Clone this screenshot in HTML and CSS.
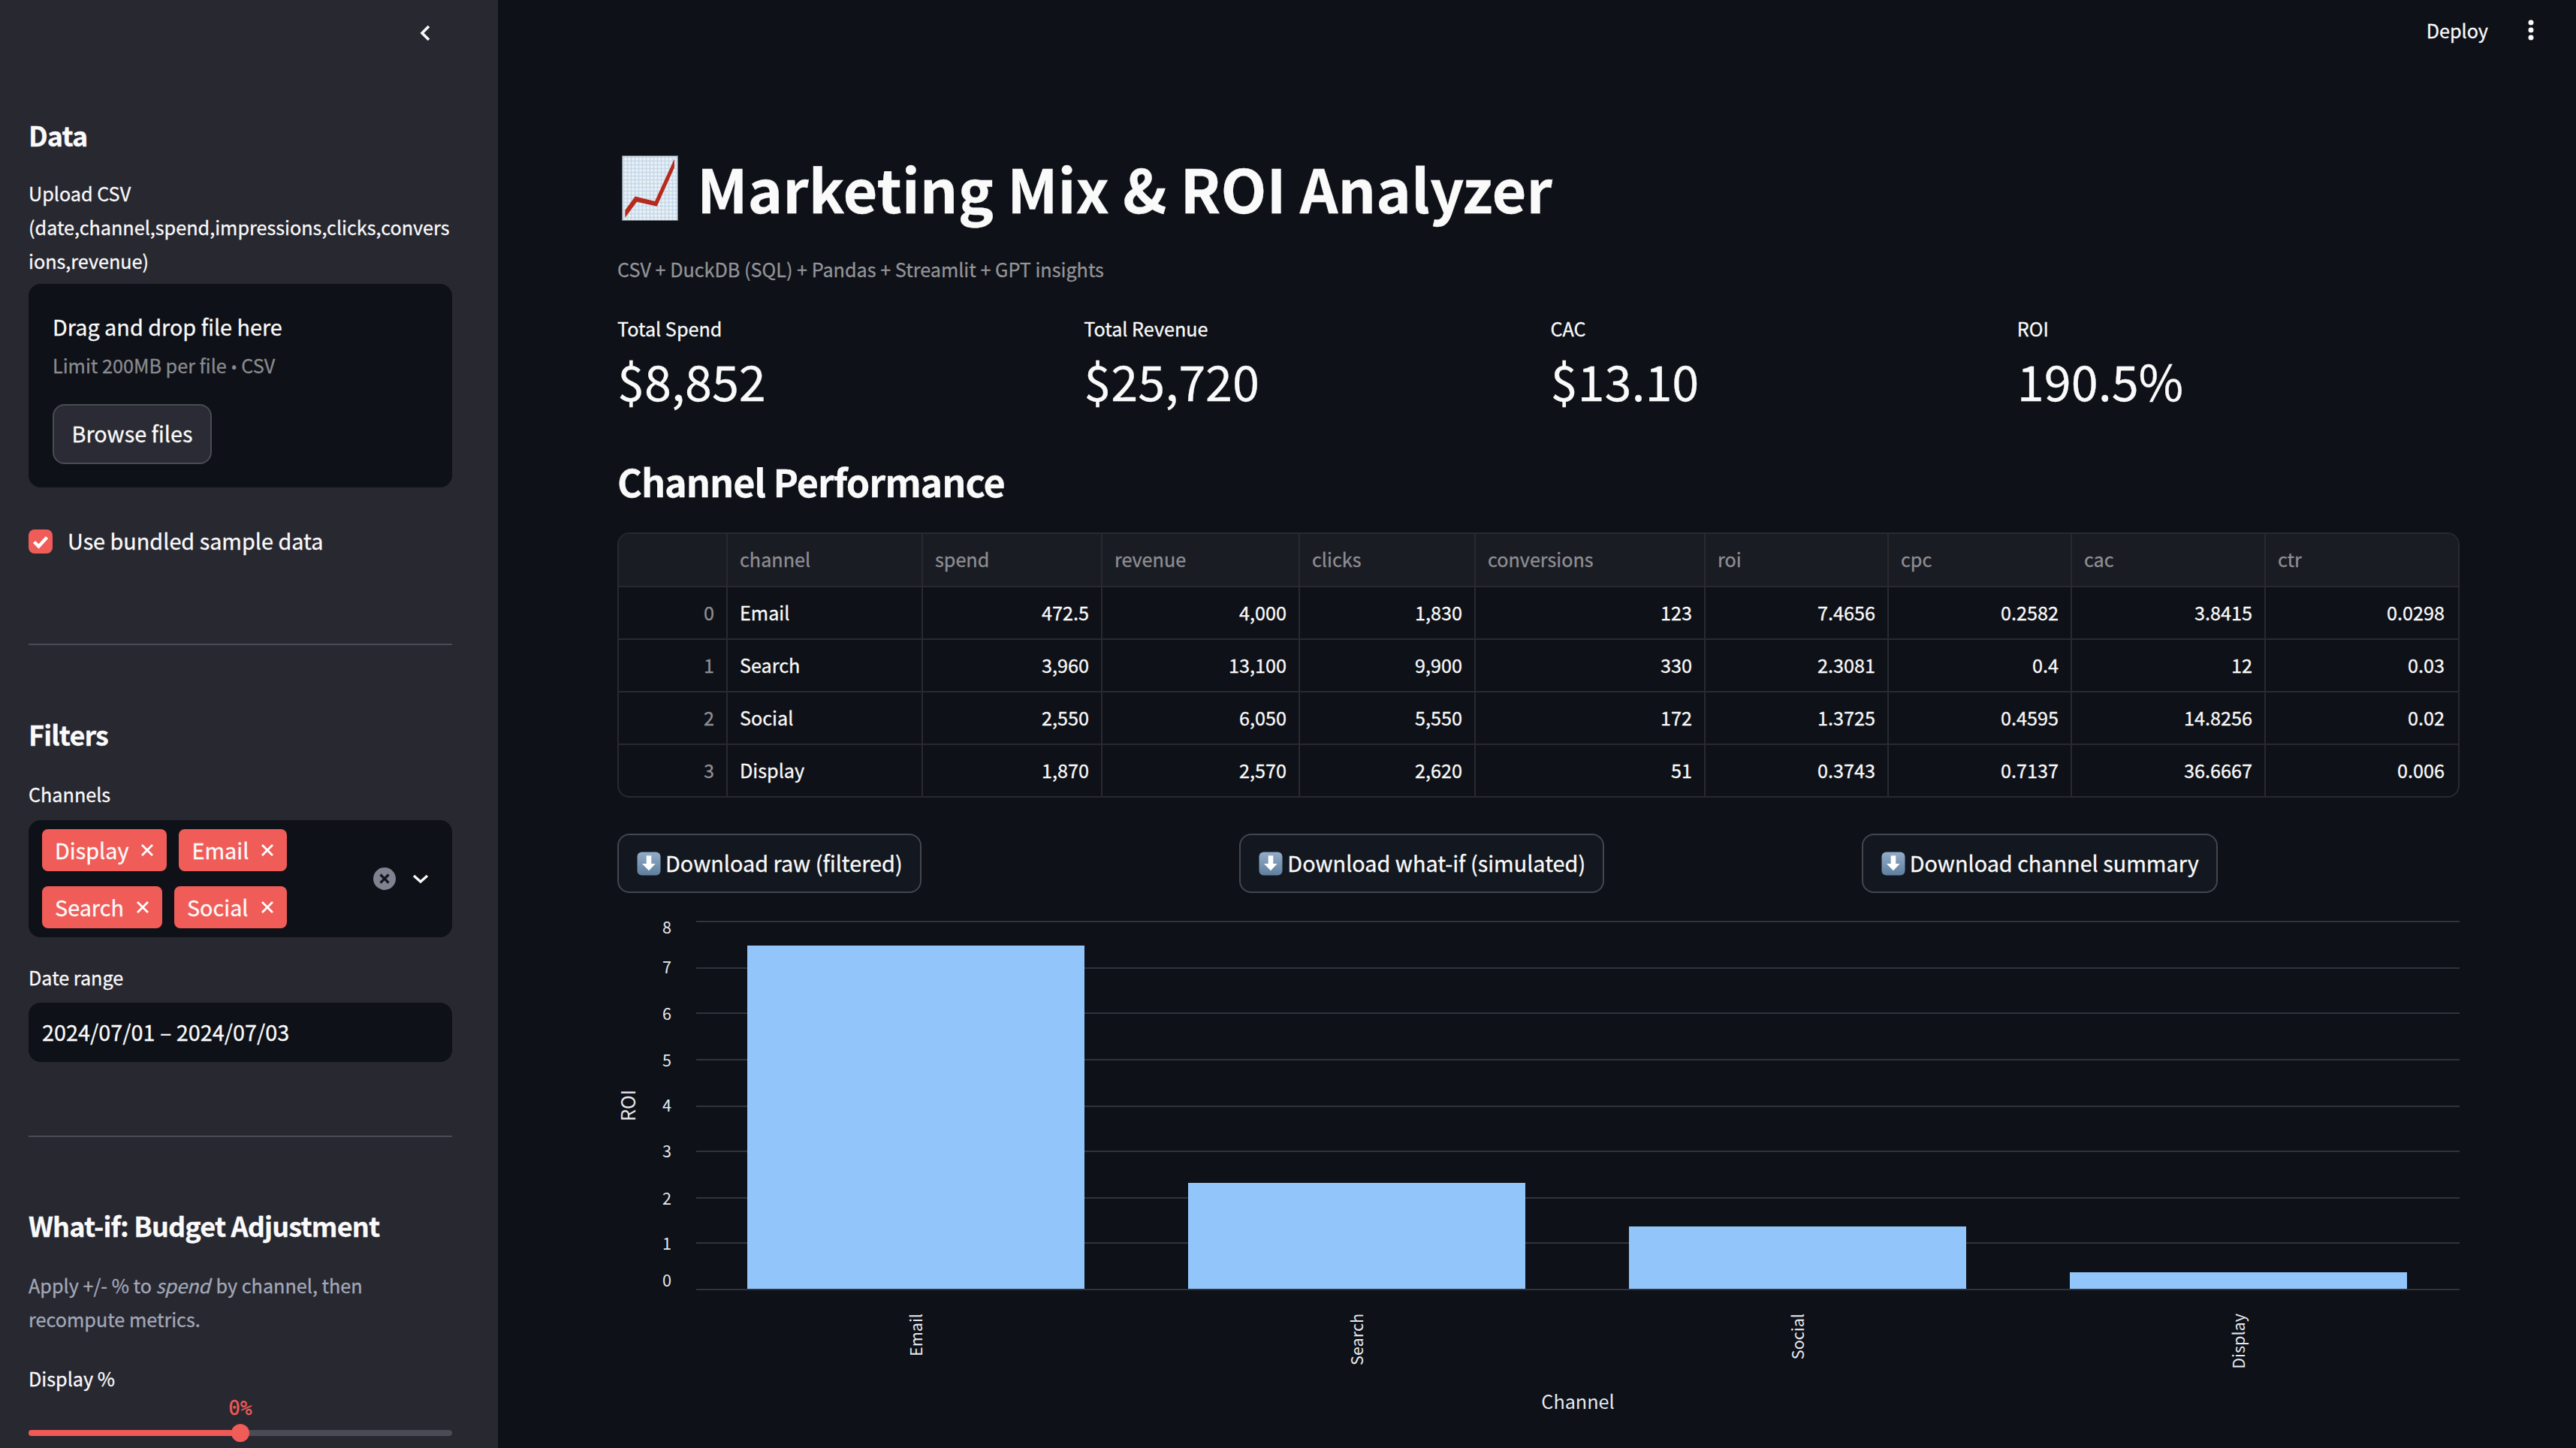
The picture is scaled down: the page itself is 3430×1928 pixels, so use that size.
FILE: index.html
```html
<!DOCTYPE html>
<html lang="en">
<head>
    <meta charset="UTF-8">
    <title>Marketing Mix &amp; ROI Analyzer</title>
    <link rel="stylesheet" href="styles.css">
</head>
<body>
    <aside class="sidebar">
        <div class="sidebar-top">
            <svg class="collapse" viewBox="0 0 16 24"><path d="M13 3 L4 12 L13 21" fill="none" stroke="#fafafa" stroke-width="3.6"/></svg>
        </div>

        <h2 class="side-title title-data">Data</h2>
        <p class="label label-upload">Upload CSV (date,channel,spend,impressions,clicks,conversions,revenue)</p>
        <div class="dropzone">
            <div class="drop-title">Drag and drop file here</div>
            <div class="drop-limit">Limit 200MB per file <span class="bullet">•</span> CSV</div>
            <button class="browse">Browse files</button>
        </div>
        <label class="check">
            <span class="check-box"><svg viewBox="0 0 32 32"><path d="M7.5 16.5 L13.5 22.5 L24.5 10.5" fill="none" stroke="#fff" stroke-width="4.4"/></svg></span>
            <span class="check-text">Use bundled sample data</span>
        </label>
        <hr class="rule rule-first">

        <h2 class="side-title title-filters">Filters</h2>
        <p class="label label-channels">Channels</p>
        <div class="multiselect">
            <div class="tags">
                <span class="tag">Display<svg viewBox="0 0 18 18"><path d="M2 2 L16 16 M16 2 L2 16"/></svg></span>
                <span class="tag">Email<svg viewBox="0 0 18 18"><path d="M2 2 L16 16 M16 2 L2 16"/></svg></span>
                <span class="tag">Search<svg viewBox="0 0 18 18"><path d="M2 2 L16 16 M16 2 L2 16"/></svg></span>
                <span class="tag">Social<svg viewBox="0 0 18 18"><path d="M2 2 L16 16 M16 2 L2 16"/></svg></span>
            </div>
            <svg class="clear" viewBox="0 0 30 30"><circle cx="15" cy="15" r="15" fill="#7f828f"/><path d="M9.5 9.5 L20.5 20.5 M20.5 9.5 L9.5 20.5" stroke="#14151b" stroke-width="3.2"/></svg>
            <svg class="open" viewBox="0 0 22 14"><path d="M2 3 L11 11 L20 3" fill="none" stroke="#fafafa" stroke-width="3.4"/></svg>
        </div>
        <p class="label label-date">Date range</p>
        <div class="date-input">2024/07/01 – 2024/07/03</div>
        <hr class="rule rule-second">

        <h2 class="side-title title-whatif">What-if: Budget Adjustment</h2>
        <p class="muted">Apply +/- % to <em>spend</em> by channel, then recompute metrics.</p>
        <p class="label label-display">Display %</p>
        <div class="slider">
            <span class="slider-value">0%</span>
            <div class="track"><div class="track-fill"></div></div>
            <span class="thumb"></span>
        </div>
    </aside>

    <main class="main">
        <header class="topbar">
            <span class="deploy">Deploy</span>
            <svg class="dots" viewBox="0 0 8 28"><circle cx="4" cy="4" r="3.5"/><circle cx="4" cy="14" r="3.5"/><circle cx="4" cy="24" r="3.5"/></svg>
        </header>

        <h1 class="page-title">
            <svg class="title-emoji" viewBox="0 0 75 87">
                <defs>
                    <pattern id="paper" width="5" height="5" patternUnits="userSpaceOnUse">
                        <rect width="5" height="5" fill="#eef2f6"/>
                        <path d="M0 2.5 H5 M2.5 0 V5" stroke="#c3d8ea" stroke-width="1.6"/>
                    </pattern>
                </defs>
                <rect x="0.5" y="0.5" width="74" height="86" fill="url(#paper)" stroke="#6f7780"/>
                <path d="M4.4 72.7 L17.7 54.4 L44 61 L70 4.4 L70 16 L46.7 67.7 L20 61.7 L4.4 82.7 Z" fill="#b62a1c"/>
            </svg>
            Marketing Mix &amp; ROI Analyzer
        </h1>
        <p class="caption">CSV + DuckDB (SQL) + Pandas + Streamlit + GPT insights</p>

        <section class="metrics">
            <div class="metric"><div class="metric-label">Total Spend</div><div class="metric-value">$8,852</div></div>
            <div class="metric"><div class="metric-label">Total Revenue</div><div class="metric-value">$25,720</div></div>
            <div class="metric"><div class="metric-label">CAC</div><div class="metric-value">$13.10</div></div>
            <div class="metric"><div class="metric-label">ROI</div><div class="metric-value">190.5%</div></div>
        </section>

        <h3 class="section-title">Channel Performance</h3>

        <div class="grid-table">
            <div class="grid-row grid-head">
                <span></span><span>channel</span><span>spend</span><span>revenue</span><span>clicks</span><span>conversions</span><span>roi</span><span>cpc</span><span>cac</span><span>ctr</span>
            </div>
            <div class="grid-row">
                <span class="idx">0</span><span class="txt">Email</span><span>472.5</span><span>4,000</span><span>1,830</span><span>123</span><span>7.4656</span><span>0.2582</span><span>3.8415</span><span>0.0298</span>
            </div>
            <div class="grid-row">
                <span class="idx">1</span><span class="txt">Search</span><span>3,960</span><span>13,100</span><span>9,900</span><span>330</span><span>2.3081</span><span>0.4</span><span>12</span><span>0.03</span>
            </div>
            <div class="grid-row">
                <span class="idx">2</span><span class="txt">Social</span><span>2,550</span><span>6,050</span><span>5,550</span><span>172</span><span>1.3725</span><span>0.4595</span><span>14.8256</span><span>0.02</span>
            </div>
            <div class="grid-row">
                <span class="idx">3</span><span class="txt">Display</span><span>1,870</span><span>2,570</span><span>2,620</span><span>51</span><span>0.3743</span><span>0.7137</span><span>36.6667</span><span>0.006</span>
            </div>
        </div>

        <div class="downloads">
            <div><button class="download"><svg class="arrow-emoji" viewBox="0 0 32 32"><use href="#down-box"/></svg>Download raw (filtered)</button></div>
            <div><button class="download"><svg class="arrow-emoji" viewBox="0 0 32 32"><use href="#down-box"/></svg>Download what-if (simulated)</button></div>
            <div><button class="download"><svg class="arrow-emoji" viewBox="0 0 32 32"><use href="#down-box"/></svg>Download channel summary</button></div>
        </div>

        <svg class="sprites" width="0" height="0">
            <defs>
                <linearGradient id="box-fill" x1="0" y1="0" x2="0" y2="1">
                    <stop offset="0" stop-color="#94adc8"/>
                    <stop offset="1" stop-color="#5f7f9f"/>
                </linearGradient>
                <g id="down-box">
                    <rect x="0.5" y="0.5" width="31" height="31" rx="6" fill="url(#box-fill)"/>
                    <path d="M12.7 5.3 H19.3 V16 H24.7 L16 25.3 L7 16 H12.7 Z" fill="#fff"/>
                </g>
            </defs>
        </svg>

        <svg class="chart" viewBox="0 0 2453 728">
            <g class="grid-lines">
                <line x1="105" x2="2453" y1="27" y2="27"/>
                <line x1="105" x2="2453" y1="89" y2="89"/>
                <line x1="105" x2="2453" y1="149" y2="149"/>
                <line x1="105" x2="2453" y1="211" y2="211"/>
                <line x1="105" x2="2453" y1="273" y2="273"/>
                <line x1="105" x2="2453" y1="333" y2="333"/>
                <line x1="105" x2="2453" y1="395" y2="395"/>
                <line x1="105" x2="2453" y1="455" y2="455"/>
            </g>
            <g class="bars">
                <rect x="173" y="59" width="449" height="458"/>
                <rect x="760" y="375" width="449" height="142"/>
                <rect x="1347" y="433" width="449" height="84"/>
                <rect x="1934" y="494" width="449" height="23"/>
            </g>
            <g class="grid-lines">
                <line x1="105" x2="2453" y1="517" y2="517"/>
            </g>
            <g class="ticks-y">
                <text x="72" y="43">8</text>
                <text x="72" y="96">7</text>
                <text x="72" y="158">6</text>
                <text x="72" y="220">5</text>
                <text x="72" y="280">4</text>
                <text x="72" y="341">3</text>
                <text x="72" y="404">2</text>
                <text x="72" y="464">1</text>
                <text x="72" y="513">0</text>
            </g>
            <g class="ticks-x">
                <text transform="translate(406 549) rotate(-90)">Email</text>
                <text transform="translate(993 549) rotate(-90)">Search</text>
                <text transform="translate(1580 549) rotate(-90)">Social</text>
                <text transform="translate(2167 549) rotate(-90)">Display</text>
            </g>
            <text class="axis-title" transform="translate(24 272) rotate(-90)">ROI</text>
            <text class="axis-title" x="1279" y="676">Channel</text>
        </svg>
    </main>
</body>
</html>
```

FILE: styles.css
```css
* {
    box-sizing: border-box;
}
html, body {
    margin: 0;
    height: 100%;
    overflow: hidden;
}
body {
    display: flex;
    height: 1928px;
    background: #0e1117;
    color: #fafafa;
    font-family: "Noto Sans CJK SC", "Noto Sans", sans-serif;
    font-size: 28.8px;
    -webkit-text-stroke: 0.3px;
}
p, h1, h2, h3 {
    margin: 0;
}

/* sidebar */
.sidebar {
    flex: 0 0 663px;
    height: 1928px;
    padding: 0 61px 0 38px;
    background: #282831;
    overflow: hidden;
}
.sidebar-top {
    height: 88px;
    display: flex;
    justify-content: flex-end;
    align-items: center;
    padding-right: 28px;
}
.collapse {
    width: 16px;
    height: 24px;
}
.side-title {
    font-size: 36px;
    font-weight: 700;
    line-height: 60px;
    letter-spacing: -0.85px;
}
.title-data { margin-top: 61px; }
.title-filters { margin-top: 88px; }
.title-whatif { margin-top: 87px; }

.label {
    font-size: 25.2px;
    line-height: 45px;
    overflow-wrap: anywhere;
}
.label-upload { margin-top: 26px; }
.label-channels { margin-top: 28px; }
.label-date { margin-top: 31px; }
.label-display { margin-top: 34px; }

.dropzone {
    margin-top: 8px;
    height: 271px;
    padding: 31px 32px 0;
    background: #0e1117;
    border-radius: 16px;
}
.drop-title {
    line-height: 51px;
}
.drop-limit {
    margin-top: 4px;
    font-size: 25.2px;
    line-height: 45px;
    color: #8a8b90;
}
.bullet {
    font-family: "Noto Sans", sans-serif;
    font-size: 22px;
}
.browse {
    display: block;
    margin-top: 27px;
    width: 212px;
    height: 80px;
    padding: 0 0 4px;
    background: #2a2b34;
    border: 2px solid #4a4b54;
    border-radius: 16px;
    color: #fafafa;
    font: inherit;
}
.check {
    margin-top: 56px;
    display: flex;
    align-items: center;
    height: 32px;
    gap: 20px;
}
.check-box {
    flex-shrink: 0;
    width: 32px;
    height: 32px;
    background: #f05c58;
    border-radius: 8px;
}
.check-box svg {
    display: block;
}
.check-text {
    padding-bottom: 4px;
}
.rule {
    height: 2px;
    border: 0;
    margin: 0;
    background: #4a4b54;
}
.rule-first { margin-top: 120px; }
.rule-second { margin-top: 98px; }

.multiselect {
    margin-top: 12px;
    height: 156px;
    padding: 12px 18px;
    background: #0e1117;
    border-radius: 16px;
    display: flex;
    align-items: center;
}
.tags {
    flex: 0 0 346px;
    display: flex;
    flex-wrap: wrap;
    gap: 20px 16px;
}
.tag {
    height: 56px;
    padding: 0 17px;
    display: flex;
    align-items: center;
    gap: 16px;
    background: #f05c58;
    border-radius: 8px;
    line-height: 54px;
}
.tag svg {
    width: 18px;
    height: 18px;
    fill: none;
    stroke: #fff;
    stroke-width: 2.8;
}
.clear {
    width: 30px;
    height: 30px;
    margin-left: 95px;
}
.open {
    width: 22px;
    height: 14px;
    margin-left: 22px;
}
.date-input {
    margin-top: 11px;
    height: 79px;
    padding-left: 18px;
    background: #0e1117;
    border-radius: 16px;
    line-height: 77px;
}
.muted {
    margin-top: 28px;
    font-size: 25.2px;
    line-height: 45px;
    color: #a3a8b8;
}
.muted em {
    padding-right: 2px;
}
.slider {
    position: relative;
    height: 54px;
    margin-top: 1px;
}
.slider-value {
    position: absolute;
    left: 282px;
    top: 1px;
    transform: translateX(-50%);
    font-family: "DejaVu Sans Mono", monospace;
    font-size: 26px;
    line-height: 30px;
    color: #f05c58;
}
.track {
    position: absolute;
    left: 0;
    right: 0;
    top: 45px;
    height: 8px;
    border-radius: 4px;
    background: #4a4b55;
    overflow: hidden;
}
.track-fill {
    width: 282px;
    height: 8px;
    background: #ef5a56;
}
.thumb {
    position: absolute;
    left: 270px;
    top: 37px;
    width: 24px;
    height: 24px;
    border-radius: 50%;
    background: #f05c58;
}

/* main column */
.main {
    flex: 1;
    min-width: 0;
    padding: 0 155px 0 159px;
}
.topbar {
    height: 80px;
    margin-right: -155px;
    padding-right: 56px;
    display: flex;
    justify-content: flex-end;
    align-items: center;
    gap: 53px;
    font-size: 25.2px;
}
.dots {
    width: 8px;
    height: 28px;
    fill: #fafafa;
}
.page-title {
    margin-top: 117px;
    display: flex;
    align-items: center;
    font-size: 79.2px;
    font-weight: 700;
    line-height: 106px;
}
.title-emoji {
    width: 75px;
    height: 87px;
    margin: 0 25px 0 6px;
}
.caption {
    margin-top: 33px;
    font-size: 25.2px;
    line-height: 45px;
    color: #939498;
}
.metrics {
    margin-top: 34px;
    display: grid;
    grid-template-columns: repeat(4, 1fr);
    gap: 32px;
}
.metric-label {
    font-size: 25.2px;
    line-height: 45px;
}
.metric-value {
    margin-top: 1px;
    font-size: 64.8px;
    line-height: 90px;
}
.section-title {
    margin-top: 55px;
    font-size: 50.4px;
    font-weight: 700;
    line-height: 70px;
    letter-spacing: -1.1px;
}

.grid-table {
    margin-top: 33px;
    height: 353px;
    border: 2px solid #282a30;
    border-radius: 16px;
    overflow: hidden;
    font-size: 25.2px;
}
.grid-row {
    display: grid;
    grid-template-columns: 145px 260px 239px 263px 234px 306px 244px 244px 258px 256px;
    height: 70px;
    border-bottom: 2px solid #282a30;
}
.grid-row:last-child {
    height: 68px;
    border-bottom: 0;
}
.grid-row span {
    display: flex;
    align-items: center;
    justify-content: flex-end;
    padding: 0 16px 3px;
    border-right: 2px solid #282a30;
}
.grid-row span:last-child {
    padding-right: 18px;
    border-right: 0;
}
.grid-row .txt {
    justify-content: flex-start;
}
.grid-row .idx {
    color: #8e8f93;
}
.grid-head {
    height: 71px;
    background: #1a1c24;
    color: #8e8f93;
}
.grid-head span {
    justify-content: flex-start;
}

.downloads {
    margin-top: 48px;
    display: grid;
    grid-template-columns: repeat(3, 1fr);
    gap: 32px;
}
.download {
    height: 79px;
    padding: 0 23px 3px 24px;
    display: inline-flex;
    align-items: center;
    gap: 6px;
    background: #13171f;
    border: 2px solid #44464f;
    border-radius: 16px;
    color: #fafafa;
    font: inherit;
}
.arrow-emoji {
    width: 32px;
    height: 32px;
    margin-top: 3px;
}
.sprites {
    position: absolute;
}

/* chart */
.chart {
    display: block;
    margin-top: 11px;
    width: 2453px;
    height: 728px;
    font-family: "Noto Sans CJK SC", "Noto Sans", sans-serif;
    -webkit-text-stroke: 0;
}
.grid-lines line {
    stroke: #31333c;
    stroke-width: 2;
}
.bars rect {
    fill: #92c5f9;
}
.ticks-y text {
    fill: #e6e9f0;
    font-size: 21.6px;
    text-anchor: end;
}
.ticks-x text {
    fill: #e6e9f0;
    font-size: 21.6px;
    text-anchor: end;
}
.axis-title {
    fill: #e6e9f0;
    font-size: 25.2px;
    text-anchor: middle;
}
```
